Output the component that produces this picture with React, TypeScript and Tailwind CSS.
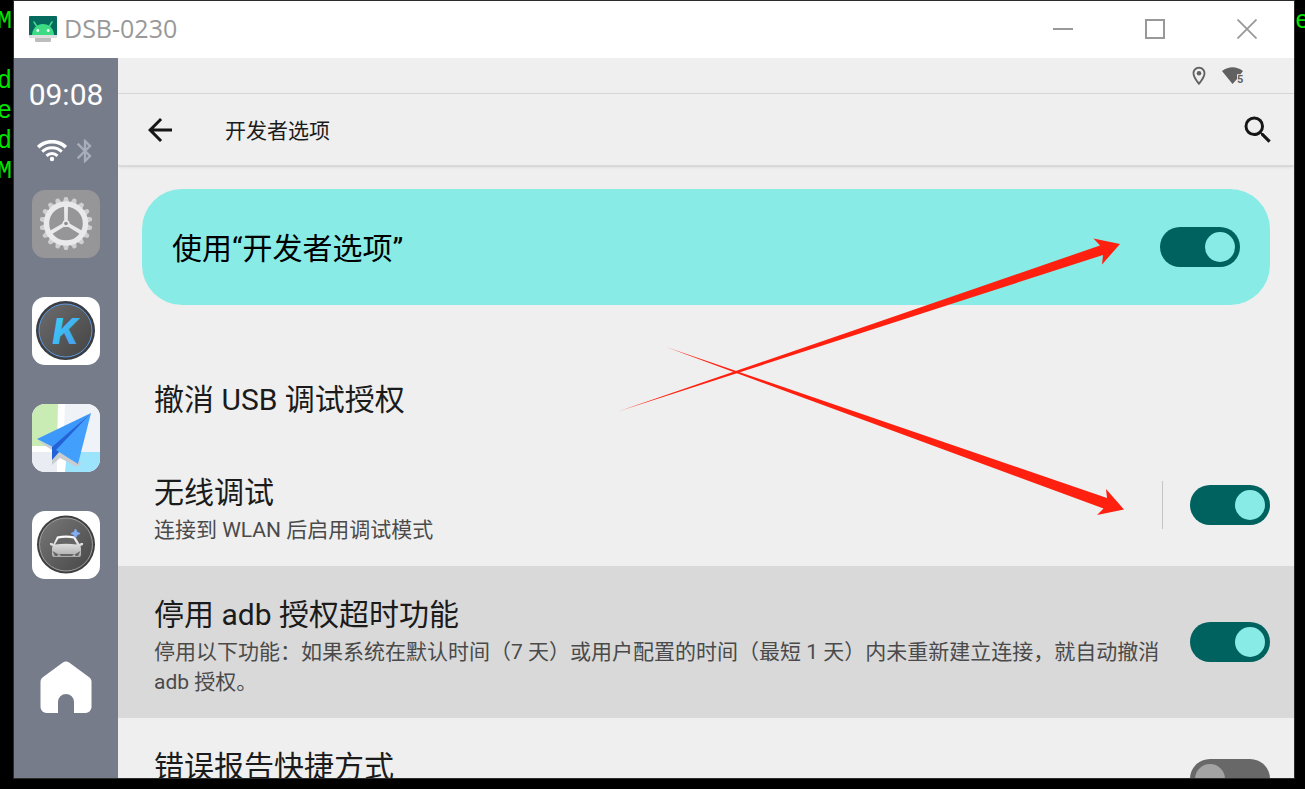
import { useId } from "react"
import { MdArrowBack, MdBluetooth, MdSearch } from "react-icons/md"

const terminalLines = ["M-", "", "de", "e", "de", "M-"]

const gearTeeth = Array.from({ length: 18 }, (_, i) => i * 20)

function AndroidLogo() {
  return (
    <svg viewBox="0 0 28 28" className="size-7" aria-hidden="true">
      <rect x="0" y="1" width="28" height="22" rx="1" fill="#dedede" />
      <path d="M1 1h26a1 1 0 0 1 1 1v18H0V2a1 1 0 0 1 1-1z" fill="#056b5f" />
      <path d="M3 20C3.500 13 8 9 14 9S24.500 13 25 20z" fill="#3ddc84" />
      <path d="M5 7l3.500 5.500M23 7l-3.500 5.500" stroke="#3ddc84" strokeWidth="1.600" strokeLinecap="round" />
      <circle cx="8.800" cy="15.500" r="1.400" fill="#fff" />
      <circle cx="19.200" cy="15.500" r="1.400" fill="#fff" />
      <path d="M6 23h16v3a1 1 0 0 1-1 1H7a1 1 0 0 1-1-1z" fill="#bdbdbd" />
    </svg>
  )
}

function WifiIcon() {
  return (
    <svg viewBox="0 0 30 22" className="h-[22px] w-[30px]" fill="none" stroke="#fff" aria-hidden="true">
      <path d="M1.200 7.200C9-.2 21-.2 28.800 7.200" strokeWidth="3.600" />
      <path d="M5.200 11.700c5.500-5.200 14.100-5.200 19.600 0" strokeWidth="3" />
      <path d="M9.500 15.800c3.200-3 7.800-3 11 0" strokeWidth="3" />
      <circle cx="15" cy="19" r="2.200" fill="#fff" stroke="none" />
    </svg>
  )
}

function SettingsIcon() {
  return (
    <svg viewBox="0 0 68 68" className="size-full" aria-hidden="true">
      <rect width="68" height="68" rx="13" fill="#969698" />
      <g transform="translate(34 33.500)">
        {gearTeeth.map((angle) => (
          <path key={angle} d="M-3.200-21h6.400l-1.400-5q-1.800-1-3.600 0z" fill="#cfcfd1" transform={`rotate(${angle})`} />
        ))}
        <circle r="19.500" fill="none" stroke="#e9e9eb" strokeWidth="5.400" />
        <path
          d="M-2-18h4L1.700-3l1.800 3L16.600 7.500l-2.400 3.300L2 3.200h-4l-12.200 7.600-2.400-3.300L-3.500 0l1.800-3z"
          fill="#e9e9eb"
        />
        <circle r="3.500" fill="#e9e9eb" />
        <circle r="1.800" fill="#8c8c8f" />
      </g>
    </svg>
  )
}

function KIcon() {
  return (
    <svg viewBox="0 0 68 68" className="size-full" aria-hidden="true">
      <defs>
        <linearGradient id="k-fill" x1="0" y1="0" x2="1" y2="1">
          <stop offset="0" stopColor="#35d6f5" />
          <stop offset="1" stopColor="#4b93ee" />
        </linearGradient>
        <linearGradient id="k-disc" x1="0" y1="0" x2="1" y2="1">
          <stop offset="0" stopColor="#6c6c6e" />
          <stop offset="1" stopColor="#444" />
        </linearGradient>
      </defs>
      <rect width="68" height="68" rx="13" fill="#fff" />
      <circle cx="33.500" cy="33.500" r="29.500" fill="#3b3d42" />
      <circle cx="33.500" cy="33.500" r="26.500" fill="url(#k-disc)" stroke="#5d9be0" strokeWidth="1" />
      <text
        x="33.500"
        y="47"
        textAnchor="middle"
        fontFamily="Inter, sans-serif"
        fontSize="36"
        fontStyle="italic"
        fontWeight="800"
        fill="url(#k-fill)"
      >
        K
      </text>
    </svg>
  )
}

function MapIcon() {
  return (
    <svg viewBox="0 0 68 68" className="size-full" aria-hidden="true">
      <defs>
        <clipPath id="map-tile">
          <rect width="68" height="68" rx="13" />
        </clipPath>
      </defs>
      <g clipPath="url(#map-tile)">
        <rect width="68" height="68" fill="#fff" />
        <path d="M0 0h26L25 42H0z" fill="#c8ecb4" />
        <path d="M33 0h35v48H31z" fill="#eff3f8" />
        <path d="M0 48h25v20H0z" fill="#e9edf3" />
        <path d="M35 48h33v20H33z" fill="#9be4fb" />
        <path d="M6 37l14 9v15l8-7 17 9 4-4-20-14z" fill="#c9cdd0" />
        <path d="M59 9L5 35l16 8z" fill="#3d98fb" />
        <path d="M59 9L20 43v13l8-9z" fill="#2362d6" />
        <path d="M59 9L24 46l22 14z" fill="#429ffc" />
      </g>
    </svg>
  )
}

function CarIcon() {
  return (
    <svg viewBox="0 0 68 68" className="size-full" aria-hidden="true">
      <defs>
        <linearGradient id="car-disc" x1="0" y1="0" x2="1" y2="1">
          <stop offset="0" stopColor="#787878" />
          <stop offset="1" stopColor="#474747" />
        </linearGradient>
        <linearGradient id="car-body" x1="0" y1="0" x2="0" y2="1">
          <stop offset="0" stopColor="#fff" />
          <stop offset="1" stopColor="#aaa" />
        </linearGradient>
      </defs>
      <rect width="68" height="68" rx="13" fill="#fff" />
      <circle cx="34" cy="33.500" r="29" fill="#404040" />
      <circle cx="34" cy="33.500" r="26.500" fill="url(#car-disc)" stroke="#b5b5b5" strokeWidth=".8" />
      <path
        d="M25 25.500q9-2 18 0l4.500 7.500 1.500-1h2v2l-2.500 1q.5 2 .5 4v5q0 2-2 2H22q-2 0-2-2v-5q0-2 .5-4L18 34v-2h2l1.500 1z"
        fill="url(#car-body)"
      />
      <path d="M26.500 27.500q7.500-1.500 15 0l3.500 6q-11-1.500-22 0z" fill="#666" />
      <path d="M20.500 40l6 3.500-1.500 1.500h-2zM48.500 40l-6 3.500 1.500 1.500h2zM27 43h15l-2 2H29z" fill="#666" />
      <path d="M43.500 18q.8 4 4.500 4.500-3.700.5-4.500 4.500-.8-4-4.500-4.500 3.700-.5 4.500-4.500z" fill="#82aef8" stroke="#82aef8" />
    </svg>
  )
}

const apps = [
  { icon: <SettingsIcon />, label: "设置" },
  { icon: <KIcon />, label: "K" },
  { icon: <MapIcon />, label: "地图" },
  { icon: <CarIcon />, label: "车辆" },
]

function Switch({ id, checked = false }: { id: string; checked?: boolean }) {
  return (
    <input
      id={id}
      type="checkbox"
      role="switch"
      defaultChecked={checked}
      className="h-10 w-20 shrink-0 cursor-pointer appearance-none rounded-full bg-[#686868] p-[5px] before:block before:size-[30px] before:rounded-full before:bg-[#a3a3a3] before:content-[''] checked:bg-[#00625f] checked:before:ml-10 checked:before:bg-[#88ebe5]"
    />
  )
}

type OptionRowProps = {
  title: string
  summary?: string
  active?: boolean
  divided?: boolean
  checked?: boolean
}

function OptionRow({ title, summary, active, divided, checked }: OptionRowProps) {
  const id = useId()
  return (
    <div className={`flex min-h-[122px] shrink-0 items-center gap-6 pr-6 pl-9 ${active ? "bg-[#d9d9d9]" : ""}`}>
      <label htmlFor={id} className="flex-1 self-start pt-[27px] pb-[21px]">
        <span className="block text-[30px] leading-[44px] text-[#1b1b1b]">{title}</span>
        {summary && <span className="block text-[21px] leading-[30px] text-[#4a4a4a]">{summary}</span>}
      </label>
      {divided && <div className="mr-[3px] h-12 w-px bg-[#c4c4c4]" />}
      <Switch id={id} checked={checked} />
    </div>
  )
}

function App() {
  return (
    <div className="relative flex h-screen overflow-hidden bg-black pb-[10px] font-[Roboto,'Noto_Sans_CJK_SC',sans-serif]">
      {/* Terminal behind the window */}
      <div className="w-[13px] shrink-0 overflow-hidden pt-[7px] font-['Liberation_Mono',monospace] text-[25px] leading-[30px] text-[#00e400]">
        {terminalLines.map((line, index) => (
          <div key={index} className="-ml-[3px] h-[30px] whitespace-pre">
            {line}
          </div>
        ))}
      </div>

      <div className="flex min-w-0 flex-1 flex-col overflow-hidden border border-[#2b2b2b] bg-[#efefef]">
        {/* Title bar */}
        <div className="flex h-[57px] shrink-0 items-center bg-white pr-px pb-[2px]">
          <div className="flex flex-1 items-center gap-[7px] pl-[15px]">
            <AndroidLogo />
            <span className="pb-[2px] font-['Open_Sans',sans-serif] text-[25px] leading-8 text-[#999]">DSB-0230</span>
          </div>
          <button aria-label="最小化" className="flex h-full w-[92px] items-center justify-center">
            <svg viewBox="0 0 20 20" className="size-5" stroke="#999" strokeWidth="2">
              <path d="M0 10h20" />
            </svg>
          </button>
          <button aria-label="最大化" className="flex h-full w-[92px] items-center justify-center">
            <svg viewBox="0 0 20 20" className="size-5" stroke="#999" strokeWidth="2" fill="none">
              <path d="M1 1h18v18H1z" />
            </svg>
          </button>
          <button aria-label="关闭" className="flex h-full w-[92px] items-center justify-center">
            <svg viewBox="0 0 20 20" className="size-5" stroke="#999" strokeWidth="1.800">
              <path d="M.5.5l19 19M19.500.5l-19 19" />
            </svg>
          </button>
        </div>

        <div className="flex min-h-0 flex-1">
          {/* Dock */}
          <nav className="flex w-[104px] shrink-0 flex-col items-center bg-[#777c8b] pt-[19px]">
            <div className="text-[30px] leading-9 text-white">09:08</div>
            <div className="mt-[26px] flex h-6 items-center gap-1 pl-1">
              <WifiIcon />
              <MdBluetooth className="size-7 text-[#a9adba]" />
            </div>
            <div className="mt-[27px] flex flex-col gap-[39px]">
              {apps.map((app) => (
                <button key={app.label} aria-label={app.label} className="size-[68px]">
                  {app.icon}
                </button>
              ))}
            </div>
            <button aria-label="主页" className="mt-[82px]">
              <svg viewBox="0 0 52 52" className="size-[52px]">
                <path
                  d="M22.500 1.800a6 6 0 0 1 7 0l19 14a6 6 0 0 1 3 5.200V46a6 6 0 0 1-6 6H34V41a8 8 0 0 0-16 0v11H6.500a6 6 0 0 1-6-6V21a6 6 0 0 1 3-5.200z"
                  fill="#fff"
                />
              </svg>
            </button>
          </nav>

          <main className="flex min-w-0 flex-1 flex-col overflow-hidden">
            {/* Status bar */}
            <div className="flex h-9 shrink-0 items-center justify-end gap-3 border-b border-[#d9d9d9] pr-[50px]">
              <svg viewBox="0 0 24 24" className="size-[22px]" fill="#616161" aria-hidden="true">
                <path d="M12 2C8.130 2 5 5.130 5 9c0 5.250 7 13 7 13s7-7.750 7-13c0-3.870-3.130-7-7-7zM7 9c0-2.760 2.240-5 5-5s5 2.240 5 5c0 2.880-2.880 7.190-5 9.880C9.920 16.210 7 11.850 7 9z" />
                <circle cx="12" cy="9" r="2.500" />
              </svg>
              <svg viewBox="0 0 22 18" className="h-[18px] w-[22px]" fill="#616161" aria-hidden="true">
                <path d="M0 4Q10.500-3.500 21 4l-2.500 3.200H15V12l-4.500 5z" />
                <text x="15" y="16" fontFamily="Roboto, sans-serif" fontSize="11" fontWeight="700">
                  5
                </text>
              </svg>
            </div>

            {/* App bar */}
            <header className="flex h-[72px] shrink-0 items-center border-b border-[#d9d9d9] pr-[18px] pl-6 shadow-sm">
              <button aria-label="返回">
                <MdArrowBack className="size-9 text-[#161616]" />
              </button>
              <h1 className="ml-[47px] flex-1 pt-[2px] text-[21px] leading-[30px] text-[#1b1b1b]">开发者选项</h1>
              <button aria-label="搜索">
                <MdSearch className="size-9 text-[#161616]" />
              </button>
            </header>

            <div className="mx-6 mt-[23px] mb-[47px] flex h-[116px] shrink-0 items-center rounded-[40px] bg-[#88ebe5] px-[30px]">
              <label htmlFor="developer-options" className="flex-1 pt-1 text-[30px] leading-[44px] text-black">
                使用“开发者选项”
              </label>
              <Switch id="developer-options" checked />
            </div>

            <button className="shrink-0 pt-[26px] pr-6 pb-[22px] pl-9 text-left text-[30px] leading-[44px] text-[#1b1b1b]">
              撤消 USB 调试授权
            </button>
            <OptionRow title="无线调试" summary="连接到 WLAN 后启用调试模式" divided checked />
            <OptionRow
              title="停用 adb 授权超时功能"
              summary="停用以下功能：如果系统在默认时间（7 天）或用户配置的时间（最短 1 天）内未重新建立连接，就自动撤消 adb 授权。"
              active
              checked
            />
            <OptionRow title="错误报告快捷方式" />
          </main>
        </div>
      </div>

      <div className="w-[10px] shrink-0 overflow-hidden pt-[7px] font-['Liberation_Mono',monospace] text-[25px] leading-[30px] text-[#00e400]">
        e
      </div>

      {/* Arrows pointing at the switches */}
      <svg
        viewBox="0 0 1305 789"
        className="pointer-events-none absolute top-0 left-0 h-[789px] w-[1305px]"
        fill="#ff2010"
        aria-hidden="true"
      >
        <path d="M618 411.500L1100 245.500 1093.500 238.500 1120 244 1102 264.500 1103 255z" />
        <path d="M666 347L1107 498 1106 489 1124 509.500 1097 515 1103.500 508.500z" />
      </svg>
    </div>
  )
}

export default App
